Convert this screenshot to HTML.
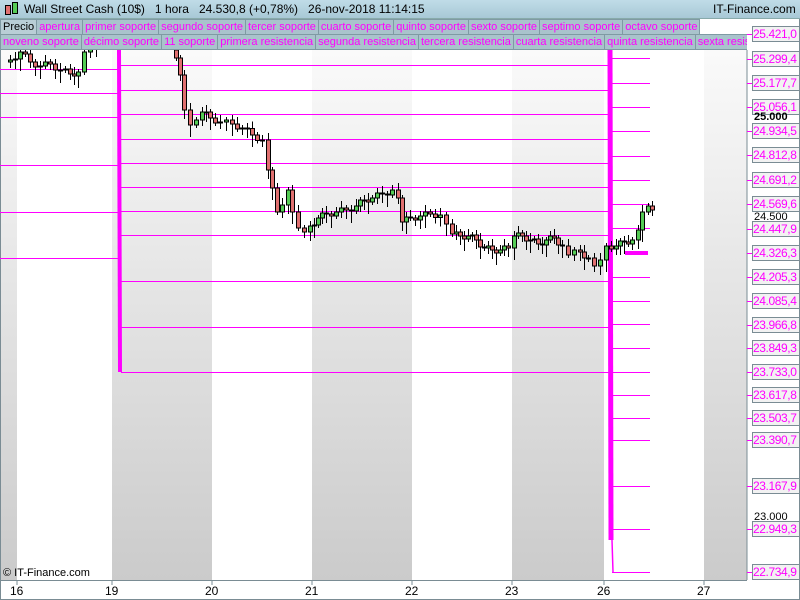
<!DOCTYPE html>
<html><head><meta charset="utf-8"><style>
*{margin:0;padding:0;box-sizing:border-box}
body{width:800px;height:600px;overflow:hidden;background:#fff;font-family:"Liberation Sans",sans-serif;position:relative}
#hdr{position:absolute;left:0;top:0;width:800px;height:19px;background:linear-gradient(#c0dce8,#a8c8d6);border-bottom:1px solid #8aa;font-size:12px;}
#hdr span{position:absolute;top:2px}
.row{position:absolute;left:0;height:16px;display:flex;font-size:11px;}
.row div{height:16px;line-height:15px;padding:0 2px;background:#a9c3cc;border:1px solid #7f9aa3;border-left:none;color:#ff00ff;white-space:nowrap}
.row div.p{color:#000;background:#b9ced6;border-left:1px solid #7f9aa3}
.lbl{position:absolute;left:752px;width:48px;height:16px;border:1px solid #7a8c94;background:#f2f2f2;color:#ff00ff;font-size:12px;letter-spacing:-0.4px;line-height:14px;padding-left:0;white-space:nowrap;overflow:hidden}
.blk{position:absolute;left:754px;font-size:11px;color:#000}
.dt{position:absolute;top:584px;font-size:12px}
</style></head><body>
<svg width="800" height="600" style="position:absolute;left:0;top:0">
<defs><linearGradient id="g" x1="0" y1="0" x2="0" y2="1"><stop offset="0" stop-color="#fafafa"/><stop offset="1" stop-color="#cbcbcb"/></linearGradient></defs>
<rect x="0" y="50" width="747" height="530" fill="#fff"/>
<rect x="0" y="50" width="17" height="530" fill="url(#g)"/>
<rect x="112" y="50" width="100" height="530" fill="url(#g)"/>
<rect x="312" y="50" width="100" height="530" fill="url(#g)"/>
<rect x="512" y="50" width="92" height="530" fill="url(#g)"/>
<rect x="704" y="50" width="43" height="530" fill="url(#g)"/>
<line x1="0.5" y1="50" x2="0.5" y2="600" stroke="#7a8c94"/>
<line x1="747" y1="50" x2="747" y2="580" stroke="#7a8c94"/>
<line x1="0" y1="580.5" x2="747" y2="580.5" stroke="#7a8c94"/>
<line x1="0" y1="599.5" x2="800" y2="599.5" stroke="#7a8c94"/>
<line x1="799.5" y1="0" x2="799.5" y2="600" stroke="#7a8c94"/>
<g stroke="#7a8c94"><line x1="17" y1="580" x2="17" y2="585"/><line x1="112" y1="580" x2="112" y2="585"/><line x1="212" y1="580" x2="212" y2="585"/><line x1="312" y1="580" x2="312" y2="585"/><line x1="412" y1="580" x2="412" y2="585"/><line x1="512" y1="580" x2="512" y2="585"/><line x1="604" y1="580" x2="604" y2="585"/><line x1="704" y1="580" x2="704" y2="585"/></g>
<g id="lines" stroke="#ff00ff" stroke-width="1" fill="none"></g>
<g id="candles"></g>
<g id="ticks" stroke="#ff00ff"></g>
</svg>
<div id="hdr"><span style="left:5px;top:5px;width:6px;height:10px;background:#e07070;border:1px solid #000"></span><span style="left:12px;top:2px;width:6px;height:12px;background:#55cc55;border:1px solid #000"></span><span style="left:24px">Wall Street Cash (10$)&nbsp;&nbsp;&nbsp;1 hora&nbsp;&nbsp;&nbsp;24.530,8 (+0,78%)&nbsp;&nbsp;&nbsp;26-nov-2018 11:14:15</span><span style="left:713px">IT-Finance.com</span></div>
<div class="row" style="top:19px"><div class="p">Precio</div><div>apertura</div><div>primer soporte</div><div>segundo soporte</div><div>tercer soporte</div><div>cuarto soporte</div><div>quinto soporte</div><div>sexto soporte</div><div>septimo soporte</div><div>octavo soporte</div></div>
<div class="row" style="top:34px;width:747px;overflow:hidden"><div class="p" style="color:#ff00ff;background:#a9c3cc">noveno soporte</div><div>décimo soporte</div><div>11 soporte</div><div>primera resistencia</div><div>segunda resistencia</div><div>tercera resistencia</div><div>cuarta resistencia</div><div>quinta resistencia</div><div>sexta resistencia</div></div>
<div id="labels"></div>
<div class="blk" style="top:111px;font-weight:bold">25.000</div>
<div class="blk" style="top:211px">24.500</div>
<div class="blk" style="top:511px">23.000</div>
<div style="position:absolute;left:3px;top:567px;font-size:11px">© IT-Finance.com</div>
<div class="dt" style="left:10px">16</div><div class="dt" style="left:105px">19</div><div class="dt" style="left:205px">20</div><div class="dt" style="left:305px">21</div><div class="dt" style="left:405px">22</div><div class="dt" style="left:505px">23</div><div class="dt" style="left:597px">26</div><div class="dt" style="left:697px">27</div>
<script>
(function(){
var NS="http://www.w3.org/2000/svg";
function el(p,t,a){var e=document.createElementNS(NS,t);for(var k in a)e.setAttribute(k,a[k]);p.appendChild(e);return e;}
var L=document.getElementById('lines');
[69,93,117,165,212,258].forEach(function(y){el(L,'line',{x1:0,y1:y+.5,x2:118,y2:y+.5});});
[65,90,114,139,163,187,211,235,281,327,372].forEach(function(y){el(L,'line',{x1:121,y1:y+.5,x2:609,y2:y+.5});});
el(L,'line',{x1:119,y1:50,x2:120,y2:372,'stroke-width':4});
[58,83,107,131,156,180,204,228,277,301,324,348,372,395,418,440,486,529,572].forEach(function(y){el(L,'line',{x1:612,y1:y+.5,x2:650,y2:y+.5});});
el(L,'line',{x1:610,y1:50,x2:611,y2:540,'stroke-width':5});
el(L,'line',{x1:612,y1:540,x2:613,y2:572,'stroke-width':1.5});
el(L,'line',{x1:625,y1:253,x2:648,y2:253,'stroke-width':4});
var T=document.getElementById('ticks');
var labs=[["25.421,0",34],["25.299,4",59],["25.177,7",83],["25.056,1",107],["24.934,5",131],["24.812,8",155],["24.691,2",180],["24.569,6",204],["24.447,9",229],["24.326,3",253],["24.205,3",277],["24.085,4",301],["23.966,8",325],["23.849,3",348],["23.733,0",372],["23.617,8",395],["23.503,7",418],["23.390,7",440],["23.167,9",486],["22.949,3",529],["22.734,9",572]];
var H='';labs.forEach(function(l){H+='<div class="lbl" style="top:'+(l[1]-8)+'px">'+l[0]+'</div>';el(T,'line',{x1:747,y1:l[1]+.5,x2:752,y2:l[1]+.5});});
document.getElementById('labels').innerHTML=H;
var raw=[[3,62],[10,60],[20,52],[30,62],[40,66],[50,64],[60,70],[70,74],[78,72],[84,52],[90,45],[96,48],[172,50],[176,58],[180,75],[184,110],[190,125],[196,120],[202,112],[210,118],[220,122],[232,124],[242,128],[252,135],[262,140],[268,170],[272,188],[277,212],[282,205],[288,190],[292,212],[298,228],[304,232],[310,226],[318,218],[326,214],[336,212],[346,210],[356,206],[364,200],[372,198],[382,194],[392,190],[398,198],[402,222],[410,218],[420,216],[430,214],[440,215],[446,224],[452,234],[460,236],[468,236],[476,240],[484,248],[492,250],[500,250],[508,248],[514,236],[522,236],[530,240],[538,244],[546,240],[554,238],[562,246],[568,255],[574,250],[580,252],[588,258],[594,266],[600,260],[606,246],[616,246],[624,242],[632,240],[638,230],[642,212],[648,206],[652,210]];
var pts=[raw[0]];
for(var j=1;j<raw.length;j++){var p=raw[j-1],q=raw[j];if(q[0]-p[0]>=8&&q[0]-p[0]<30){pts.push([Math.round((p[0]+q[0])/2),(p[1]+q[1])/2+((j%2)?-3:3)]);}pts.push(q);}
var C=document.getElementById('candles');
for(var i=1;i<pts.length;i++){var a=pts[i-1],b=pts[i];if(b[0]-a[0]>30)continue;var x=b[0];var o=a[1],c=b[1];var t0=Math.min(o,c),b0=Math.max(o,c);if(b0-t0<1){b0=t0+1;}
el(C,'line',{x1:x+.5,y1:Math.max(50,t0-3-(i%3)*2),x2:x+.5,y2:b0+3+(i%4)*3,stroke:'#000'});
el(C,'rect',{x:x-1.5,y:t0,width:4,height:b0-t0,fill:c<o?'#55cc55':'#e07070',stroke:'#000','stroke-width':1});}
})();
</script>
</body></html>
